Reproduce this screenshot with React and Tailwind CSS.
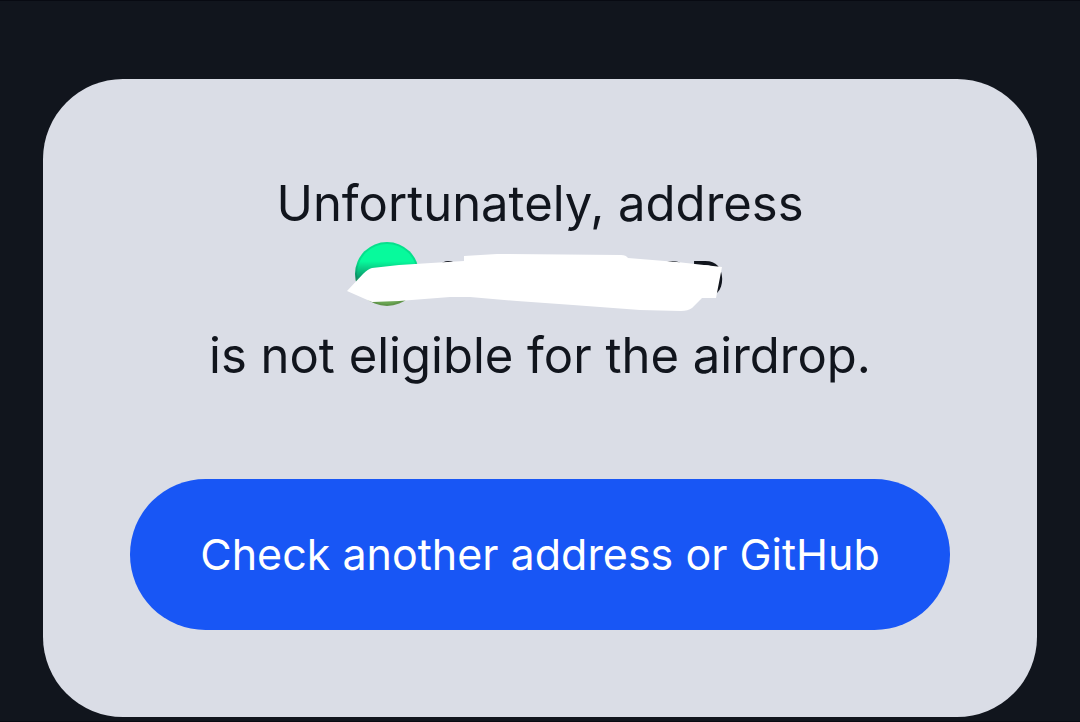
function Avatar() {
  return (
    <span className="h-16 w-16 shrink-0 rounded-full border-2 border-black/10 bg-linear-to-b from-[#07fa9c] from-30% via-[#0a9c6c] via-55% to-[#6ba653] to-90% bg-origin-border" />
  );
}

// hand-drawn marker stroke hiding the address
function Scribble() {
  return (
    <svg
      aria-hidden="true"
      viewBox="0 0 376 76"
      className="absolute top-0 -left-2 h-[76px] w-[376px]"
      fill="#fff"
    >
      <path d="M0 49 L16 32 Q21 27 25 26 L52 23 L100 20 L117 19 V14 L150 12 L274 13 Q279 13 281 16 L330 20 L375 25 L369 56 H355 L345 66 Q341 69 334 69 L293 68 L226 63 L170 59 L123 55 L103 55 L52 59 L25 60 Z" />
    </svg>
  );
}

export default function App() {
  return (
    <div className="min-h-screen border-y border-[#080a12] bg-[#11151d] px-[43px] pt-[78px] pb-1 font-['Inter','Liberation_Sans',sans-serif]">
      <main className="rounded-[80px] bg-[#dadde6] px-[87px] py-[87px] text-center">
        <div className="text-[49px] leading-[76px] text-[#11151d]">
          <p>Unfortunately, address</p>
          <div className="relative mx-auto flex h-[76px] w-[370px] items-start">
            <Avatar />
            <div className="flex flex-1 justify-between pl-[14px]">
              <span>0x</span>
              <span>CD</span>
            </div>
            <Scribble />
          </div>
          <p>is not eligible for the airdrop.</p>
        </div>
        <button className="mt-[85px] h-[151px] w-full cursor-pointer rounded-full bg-[#1856f5] text-[43px] text-white">
          Check another address or GitHub
        </button>
      </main>
    </div>
  );
}
